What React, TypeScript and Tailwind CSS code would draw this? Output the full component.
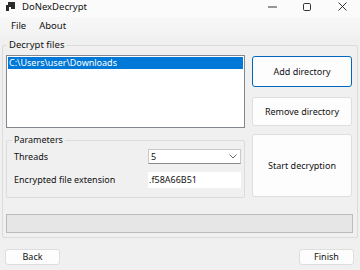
export default function App() {
  return (
    <div
      className="w-[360px] h-[270px] overflow-hidden bg-[#f0f0f0] text-[#111] flex flex-col text-[9px]"
      style={{ fontFamily: '"Noto Sans", "Open Sans", sans-serif' }}
    >
      {/* Title bar */}
      <div className="h-[17px] bg-[#fbfbfb] flex items-start leading-[14px]">
        <svg className="ml-[6px] mt-[2px]" width="9" height="9" viewBox="0 0 9 9">
          <rect x="2" y="0" width="7" height="7" fill="#2b2b2b" />
          <rect x="0" y="3" width="3" height="6" fill="#2b2b2b" />
          <rect x="3" y="5" width="2" height="2" fill="#fbfbfb" />
        </svg>
        <span className="ml-[7px] text-[9.5px]">DoNexDecrypt</span>
        <div className="ml-auto flex items-center h-[13px]">
          <svg className="mr-[26px]" width="9" height="9" viewBox="0 0 9 9">
            <path d="M0 5h9" stroke="#333" strokeWidth="1" />
          </svg>
          <svg className="mr-[27px]" width="8" height="8" viewBox="0 0 8 8">
            <rect x="0.5" y="0.5" width="7" height="7" rx="1.2" fill="none" stroke="#333" />
          </svg>
          <svg className="mr-[13px]" width="9" height="9" viewBox="0 0 9 9">
            <path d="M0.5 0.5l8 8M8.5 0.5l-8 8" stroke="#333" strokeWidth="1" />
          </svg>
        </div>
      </div>

      {/* Menu */}
      <div className="h-[19px] bg-gradient-to-b from-[#f8f8f8] to-[#f2f2f2] flex items-center gap-[13px] pl-[11px] text-[9.5px]">
        <span>File</span>
        <span>About</span>
      </div>

      {/* Decrypt files group */}
      <div className="relative mt-[9px] mx-[2px] h-[193px] border border-[#dcdcdc] rounded-[2px] pt-[9px] pl-[3px] pr-[4px]">
        <span className="absolute -top-[8px] left-[4px] px-[2px] bg-[#f0f0f0] text-[9.5px] leading-[14px]">
          Decrypt files
        </span>

        <div className="flex gap-[7px]">
          {/* Left column */}
          <div className="w-[239px] flex flex-col">
            <div className="h-[73px] bg-white border border-[#828790] p-[1px]">
              <div className="h-[12px] bg-[#0078d7] text-white leading-[12px] pl-[1px]">
                C:\Users\user\Downloads
              </div>
            </div>

            <div className="relative mt-[12px] h-[58px] border border-[#dcdcdc] rounded-[2px]">
              <span className="absolute -top-[8px] left-[5px] px-[2px] bg-[#f0f0f0] leading-[14px]">
                Parameters
              </span>
              <div className="flex items-center mt-[8px] pl-[7px] pr-[3px]">
                <span className="flex-1">Threads</span>
                <div className="w-[93px] h-[15px] bg-white border border-[#c9c9c9] border-b-[#8a8a8a] flex items-center justify-between pl-[2px] pr-[3px] leading-[13px]">
                  <span>5</span>
                  <svg width="8" height="5" viewBox="0 0 8 5">
                    <path d="M0.5 0.5l3.5 3.5 3.5-3.5" fill="none" stroke="#666" strokeWidth="1" />
                  </svg>
                </div>
              </div>
              <div className="flex items-center mt-[8px] pl-[7px] pr-[3px]">
                <span className="flex-1">Encrypted file extension</span>
                <div className="w-[93px] h-[16px] bg-white pl-[1px] leading-[15px]">
                  .f58A66B51
                </div>
              </div>
            </div>
          </div>

          {/* Right column */}
          <div className="w-[100px] flex flex-col">
            <button className="h-[31px] mt-[1px] bg-[#fdfdfd] border border-[#0067c0] rounded-[3px] flex items-center justify-center">
              Add directory
            </button>
            <button className="h-[29px] mt-[10px] bg-[#fdfdfd] border border-[#dedede] rounded-[3px] flex items-center justify-center">
              Remove directory
            </button>
            <button className="h-[63px] mt-[8px] bg-[#fdfdfd] border border-[#dedede] rounded-[3px] flex items-center justify-center">
              Start decryption
            </button>
          </div>
        </div>

        <div className="mt-[16px] h-[19px] bg-[#e6e6e6] border border-[#bcbcbc]"></div>
      </div>

      {/* Bottom buttons */}
      <div className="flex justify-between mt-[11px] pl-[5px] pr-[6px]">
        <button className="w-[55px] h-[16px] bg-[#fdfdfd] border border-[#dedede] rounded-[3px] flex items-center justify-center leading-[14px]">
          Back
        </button>
        <button className="w-[55px] h-[16px] bg-[#fdfdfd] border border-[#dedede] rounded-[3px] flex items-center justify-center leading-[14px]">
          Finish
        </button>
      </div>
    </div>
  )
}
